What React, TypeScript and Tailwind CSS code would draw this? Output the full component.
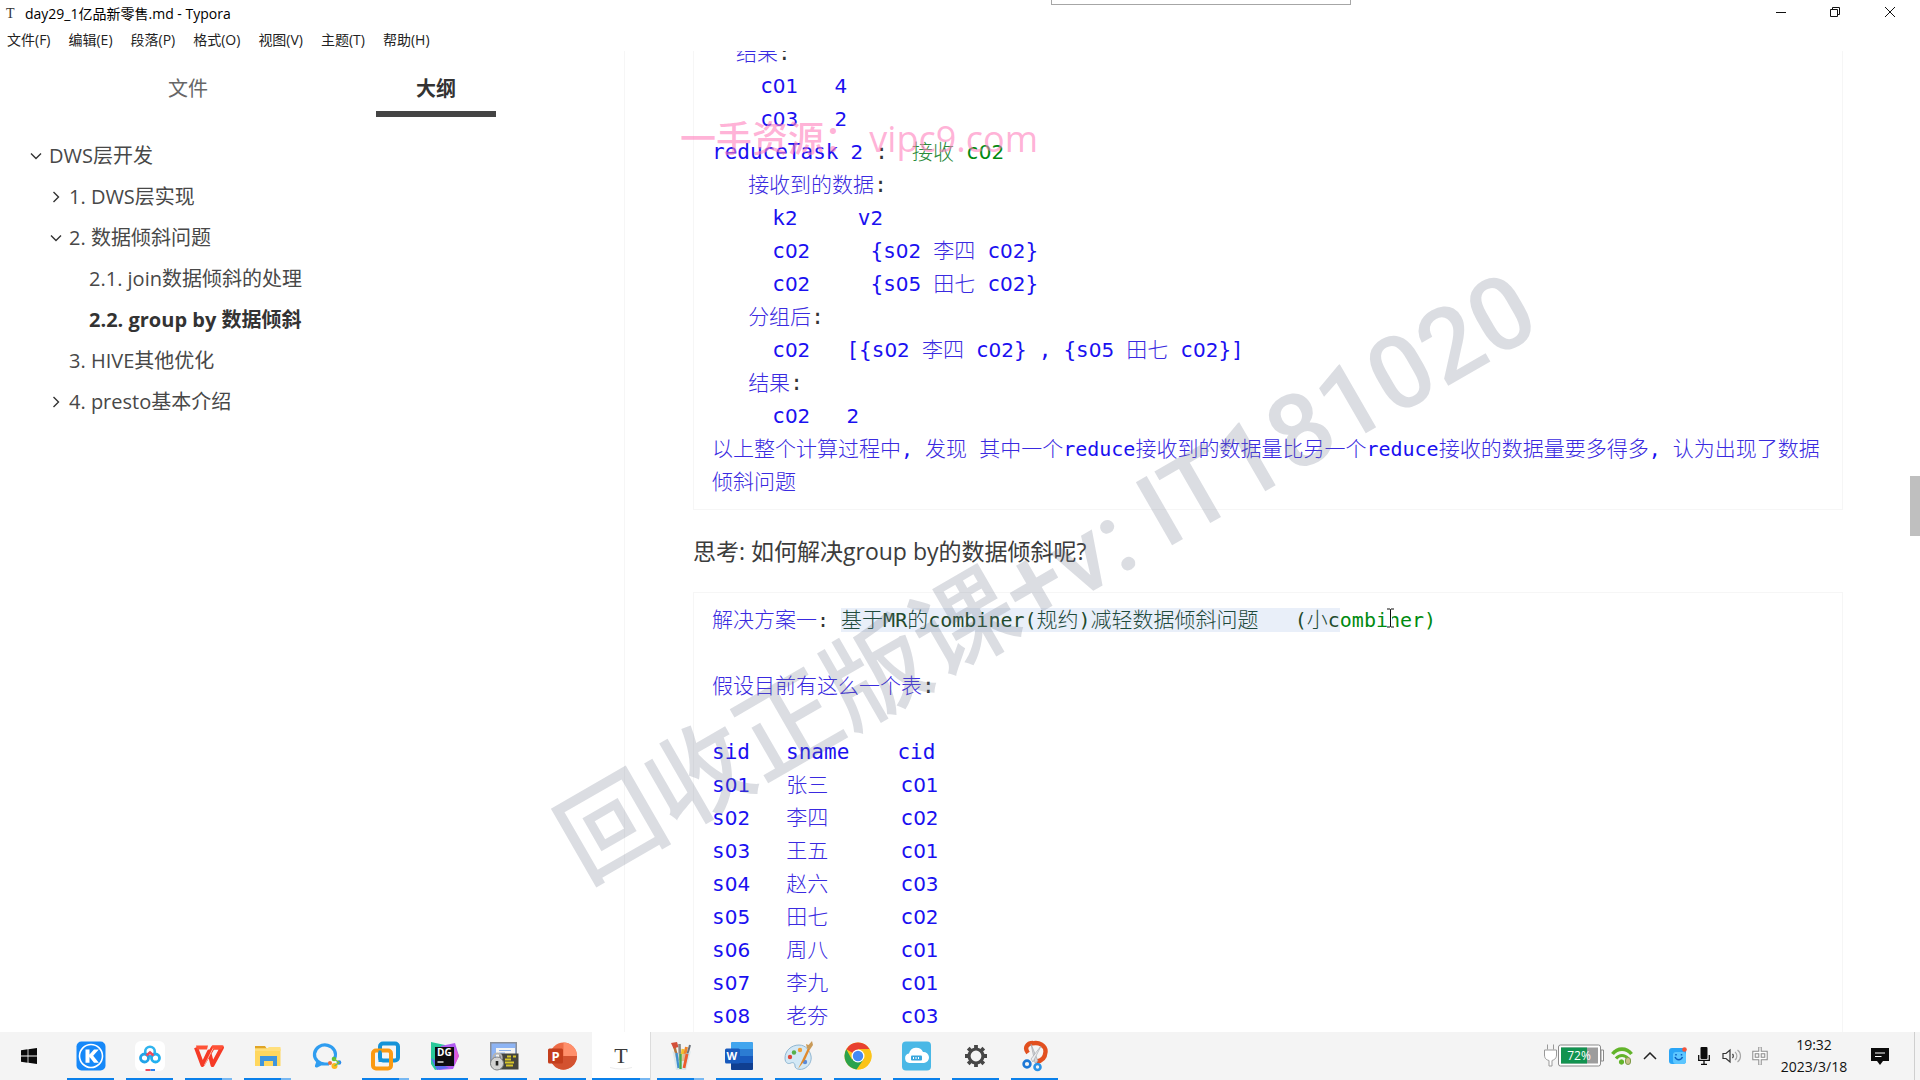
import type { ReactNode } from "react";

type Tone = "blue" | "green" | "dark" | "mark";
type Seg = [Tone, string];

const toneClass: Record<Tone, string> = {
  blue: "text-[#1a10f0]",
  green: "text-[#008a10]",
  dark: "text-[#333333]",
  mark: "text-[#1f4a2c] bg-[#e9eff9]",
};

const cjkClass: Record<Tone, string> = {
  blue: "font-light text-[21px] text-[#3a2ae0]",
  green: "font-light text-[21px] text-[#2a8a3a]",
  dark: "font-light text-[21px] text-[#333333]",
  mark: "font-light text-[21px] text-[#1f4a3c]",
};

function Run({ tone, text }: { tone: Tone; text: string }) {
  const parts = text.match(/[\u4e00-\u9fff]+|[0-9]+|\s+|[^\u4e00-\u9fff0-9\s]+/g) ?? [];
  return (
    <span className={toneClass[tone]}>
      {parts.map((p, i) => {
        if (/^[\u4e00-\u9fff]/.test(p)) {
          return <span key={i} className={cjkClass[tone]}>{p}</span>;
        }
        if (/^[0-9]/.test(p)) {
          return <span key={i} className="font-['DejaVu_Sans',sans-serif] text-[20px]">{p}</span>;
        }
        if (/^\s/.test(p)) {
          return <span key={i} className="text-[20px]">{p}</span>;
        }
        return p;
      })}
    </span>
  );
}

/* Lines that are mostly prose use the smaller Latin size. */
function isProse(line: Seg[]) {
  return line.map(([, t]) => t).join("").replace(/[^\u4e00-\u9fff]/g, "").length > 12;
}

function Fence({ lines, className }: { lines: Seg[][]; className: string }) {
  return (
    <pre
      className={`border border-[#f6f6f6] px-[18px] font-['DejaVu_Sans_Mono','Noto_Sans_CJK_SC',monospace] leading-[33px] whitespace-pre-wrap break-all ${className}`}
    >
      {lines.map((l, i) => (
        <code
          key={i}
          className={`block min-h-[33px] font-['DejaVu_Sans_Mono','Noto_Sans_CJK_SC',monospace] ${isProse(l) ? "text-[20px]" : "text-[21px]"}`}
        >
          {l.map(([tone, text], j) => (
            <Run key={j} tone={tone} text={text} />
          ))}
        </code>
      ))}
    </pre>
  );
}

const reduceLines: Seg[][] = [
  [["blue", "  结果"], ["dark", ":"]],
  [["blue", "    c01   4"]],
  [["blue", "    c03   2"]],
  [["blue", "reduceTask 2 "], ["dark", ":  "], ["green", "接收 c02"]],
  [["blue", "   接收到的数据"], ["dark", ":"]],
  [["blue", "     k2     v2"]],
  [["blue", "     c02     {s02 李四 c02}"]],
  [["blue", "     c02     {s05 田七 c02}"]],
  [["blue", "   分组后"], ["dark", ":"]],
  [["blue", "     c02   [{s02 李四 c02} , {s05 田七 c02}]"]],
  [["blue", "   结果"], ["dark", ":"]],
  [["blue", "     c02   2"]],
  [["blue", "以上整个计算过程中, 发现 其中一个reduce接收到的数据量比另一个reduce接收的数据量要多得多, 认为出现了数据倾斜问题"]],
];

const students: [string, string, string][] = [
  ["s01", "张三", "c01"],
  ["s02", "李四", "c02"],
  ["s03", "王五", "c01"],
  ["s04", "赵六", "c03"],
  ["s05", "田七", "c02"],
  ["s06", "周八", "c01"],
  ["s07", "李九", "c01"],
  ["s08", "老夯", "c03"],
];

const solutionLines: Seg[][] = [
  [
    ["blue", "解决方案一"],
    ["dark", ": "],
    ["mark", "基于MR的combiner(规约)减轻数据倾斜问题   (小c"],
    ["green", "ombiner)"],
  ],
  [],
  [["blue", "假设目前有这么一个表"], ["dark", ":"]],
  [],
  [["blue", "sid   sname    cid"]],
  ...students.map(([s, n, c]): Seg[] => [["blue", `${s}   ${n}      ${c}`]]),
];

function Chevron({ open }: { open: boolean }) {
  return (
    <svg viewBox="0 0 12 12" className="h-3 w-3" fill="none" stroke="#333" strokeWidth="1.4">
      <path d={open ? "M1 3.5 6 8.5 11 3.5" : "M3.5 1 8.5 6 3.5 11"} />
    </svg>
  );
}

function OutlineItem({
  label,
  indent,
  state,
  active,
}: {
  label: string;
  indent: string;
  state?: "open" | "closed";
  active?: boolean;
}) {
  return (
    <li className={`flex h-[41px] items-center ${indent}`}>
      <span className="flex w-[19px] shrink-0">
        {state && (
          <button aria-label={state === "open" ? "折叠" : "展开"}>
            <Chevron open={state === "open"} />
          </button>
        )}
      </span>
      <a href="#" className={active ? "font-bold text-[#333]" : "text-[#484848]"}>
        {label}
      </a>
    </li>
  );
}

const menus = ["文件(F)", "编辑(E)", "段落(P)", "格式(O)", "视图(V)", "主题(T)", "帮助(H)"];

function Ico({ children }: { children: ReactNode }) {
  return (
    <svg viewBox="0 0 32 32" className="h-8 w-8">
      {children}
    </svg>
  );
}

const bold = "font-['Open_Sans',sans-serif] font-bold";

const icons: { name: string; bar: "none" | "one" | "stack"; icon: ReactNode }[] = [
  {
    name: "K",
    bar: "one",
    icon: (
      <Ico>
        <rect x="1.5" y="1.5" width="29" height="29" rx="5" fill="#1688f8" />
        <circle cx="16" cy="16" r="11.5" fill="none" stroke="#fff" strokeWidth="1.6" />
        <path d="M10.5 9.500h4v5l4.500-5h4.800l-5.600 6.200 5.600 7h-4.800l-4.500-5.800v5.800h-4z" fill="#fff" />
      </Ico>
    ),
  },
  {
    name: "网盘",
    bar: "one",
    icon: (
      <Ico>
        <rect x="1" y="1" width="30" height="30" rx="6" fill="#fff" />
        <circle cx="16" cy="11.500" r="4.800" fill="none" stroke="#31b4ee" strokeWidth="2.600" />
        <circle cx="10.500" cy="18" r="4" fill="none" stroke="#22a3e8" strokeWidth="2.800" />
        <circle cx="21.500" cy="18" r="4" fill="none" stroke="#22b0f0" strokeWidth="2.800" />
        <path d="M12.500 15.500 16 12.500l3.500 3" fill="none" stroke="#f04b5a" strokeWidth="2.600" />
        <path d="M11.500 30h5" stroke="#f04b5a" strokeWidth="2" />
        <path d="M16.500 30h4.500" stroke="#2a82f0" strokeWidth="2" />
      </Ico>
    ),
  },
  {
    name: "WPS",
    bar: "stack",
    icon: (
      <Ico>
        <path
          d="M3 7.500 9.500 25 16 11.500 19.500 25 29 7.500H20L9.500 25"
          fill="none"
          stroke="#f53a26"
          strokeWidth="4"
          strokeLinejoin="round"
        />
        <path d="M3 5.500h12l-1 4H4z" fill="#ff5236" />
        <path d="M19 5.500h11.500l-2 4h-9.500z" fill="#ff5236" />
        <path d="M20 8.500 11.500 25" stroke="#ffae9c" strokeWidth="1" />
      </Ico>
    ),
  },
  {
    name: "资源管理器",
    bar: "stack",
    icon: (
      <Ico>
        <path d="M3 6h10l2 3H3z" fill="#e0a526" />
        <path d="M3 8.500h25.500V26H3z" fill="#ffd75e" />
        <path d="M3 8.500h12l2-1.500h11.500v4H3z" fill="#ffdf7c" />
        <path d="M8 16h17v10h-4v-5h-9v5H8z" fill="#3f95dd" />
      </Ico>
    ),
  },
  {
    name: "企业微信",
    bar: "none",
    icon: (
      <Ico>
        <path
          d="M23.500 18.500a10.500 9.500 0 1 0-9 5.500l3.500 0M7 21.500 5.500 26l5-2.500"
          fill="none"
          stroke="#2f9df0"
          strokeWidth="3.200"
          strokeLinejoin="round"
        />
        <circle cx="23" cy="19" r="2.300" fill="#5cc13a" />
        <circle cx="28" cy="22.500" r="2.300" fill="#2a8bf0" />
        <circle cx="23.500" cy="26" r="3" fill="#ffb61c" />
        <circle cx="19" cy="23" r="2" fill="#ef6a36" />
        <path d="M23 19 28 22.500 23.500 26" fill="none" stroke="#7fc23a" strokeWidth="1.500" />
      </Ico>
    ),
  },
  {
    name: "VMware",
    bar: "stack",
    icon: (
      <Ico>
        <rect x="10" y="3.500" width="18" height="17" rx="3" fill="none" stroke="#1593d8" strokeWidth="4" />
        <rect x="3" y="10.500" width="18" height="18" rx="3" fill="none" stroke="#fb9a12" strokeWidth="4" />
        <path d="M10 13v-2.500M10 18.500v2h9" fill="none" stroke="#1593d8" strokeWidth="3" />
      </Ico>
    ),
  },
  {
    name: "DataGrip",
    bar: "one",
    icon: (
      <Ico>
        <path d="M2 2l14 3 2 22-12 3-4-6z" fill="#28c99a" />
        <path d="M12 6l14-3 4 13-6 13-14 1z" fill="#b15cf0" />
        <path d="M2 18l10 6 8 4-12 2z" fill="#5a6cf0" />
        <path d="M26 8l4 8-4 8z" fill="#e45ad8" />
        <rect x="6" y="7" width="19" height="19" fill="#0c0c10" />
        <text x="8" y="16" fontSize="10" fill="#fff" className={bold}>
          DG
        </text>
        <path d="M8.500 22h6" stroke="#fff" strokeWidth="1.300" />
      </Ico>
    ),
  },
  {
    name: "终端",
    bar: "one",
    icon: (
      <Ico>
        <rect x="2" y="2" width="27" height="23" fill="#8a919c" />
        <rect x="3.500" y="3.500" width="24" height="19" fill="#8db4f4" />
        <path d="M8 8h19v13H8z" fill="#f4f4f2" />
        <path d="M11 10.500h12M11 13h6" stroke="#8ab0e8" strokeWidth="1.200" />
        <rect x="11.500" y="13.500" width="19" height="16" fill="#45453e" />
        <path d="M19 16.500h4M25 16.500h3M17 19.500h6M17 22.500h9M18 25.500h7" stroke="#d8c629" strokeWidth="1.800" />
        <path d="M5.500 19v-2a4 3.500 0 0 1 8 0v2" fill="none" stroke="#b4b4b4" strokeWidth="2.200" />
        <circle cx="9" cy="23.500" r="6.500" fill="#d2d2d2" stroke="#808285" />
        <path d="M9 21v4.500" stroke="#222" strokeWidth="2.600" />
      </Ico>
    ),
  },
  {
    name: "PowerPoint",
    bar: "one",
    icon: (
      <Ico>
        <circle cx="16.500" cy="16" r="13.500" fill="#ed6c47" />
        <path d="M16.500 2.500a13.500 13.500 0 0 1 13.500 13.500H16.500z" fill="#ff8f6b" />
        <path d="M30 16a13.500 13.500 0 0 1-25 7.200L16.500 16z" fill="#d35230" />
        <rect x="1" y="8.500" width="15" height="15" rx="1.500" fill="#c43e1c" />
        <text x="4.500" y="20.500" fontSize="13" fill="#fff" className={bold}>
          P
        </text>
      </Ico>
    ),
  },
  {
    name: "Typora",
    bar: "stack",
    icon: (
      <Ico>
        <text x="16" y="22.500" fontSize="22" textAnchor="middle" fill="#3a3a3a" className="font-['Liberation_Serif',serif]">
          T
        </text>
        <path d="M5 27.500c7 2 15 2 22 0" fill="none" stroke="#ececec" />
      </Ico>
    ),
  },
  {
    name: "画笔",
    bar: "stack",
    icon: (
      <Ico>
        <path d="M9 5l4 16" stroke="#b5743a" strokeWidth="2.600" />
        <path d="M6 3l6-1 1.500 5-5 1.500z" fill="#d4503a" />
        <path d="M14.500 4l.5 16" stroke="#8a8a86" strokeWidth="2.600" />
        <path d="M18 9l-1.500 12" stroke="#efc02a" strokeWidth="3" />
        <path d="M21.500 7l-3 14" stroke="#f0842a" strokeWidth="3" />
        <path d="M25 5l-5 18" stroke="#6a7078" strokeWidth="2" />
        <path d="M7.500 11l3.500 19h10l5-19c-3 4-15 4-18.500 0z" fill="#c9dfe6" fillOpacity=".6" />
        <path d="M11.500 13l2 15" stroke="#3f8fd0" strokeWidth="2.200" />
        <path d="M15.500 14v15" stroke="#49a84a" strokeWidth="2.400" />
        <path d="M22 14l-3 14" stroke="#ee5c2c" strokeWidth="2.800" />
      </Ico>
    ),
  },
  {
    name: "Word",
    bar: "one",
    icon: (
      <Ico>
        <rect x="7" y="2" width="22" height="28" rx="1.500" fill="#2b7cd3" />
        <path d="M7 3.500A1.500 1.500 0 0 1 8.500 2h19A1.500 1.500 0 0 1 29 3.500V9H7z" fill="#41a5ee" />
        <path d="M7 16h22v7H7z" fill="#185abd" />
        <path d="M7 23h22v5.500a1.500 1.500 0 0 1-1.500 1.500h-19A1.500 1.500 0 0 1 7 28.500z" fill="#103f91" />
        <rect x="1" y="8.500" width="15" height="15" rx="1.500" fill="#185abd" />
        <text x="2.500" y="20" fontSize="11" fill="#fff" className={bold}>
          W
        </text>
      </Ico>
    ),
  },
  {
    name: "画图",
    bar: "one",
    icon: (
      <Ico>
        <path
          d="M16 5C8 5 2 11 2 18c0 6 4 6 6 5s4 0 4 3 4 4 8 3c6-2 9-8 8-13S23 5 16 5z"
          fill="#d3e8f5"
          stroke="#8fb6d2"
        />
        <circle cx="7" cy="17" r="2.200" fill="#e0483a" />
        <circle cx="11" cy="12.500" r="2.200" fill="#56b04a" />
        <circle cx="17" cy="10" r="2.200" fill="#efa03a" />
        <circle cx="22" cy="22" r="2.200" fill="#5a8ad8" />
        <path d="M25 8 15 29l7-9 5-11z" fill="#e08a2c" />
        <path d="M23 4l2.500 1L29 1l1 4-3 4.500-3-1z" fill="#c99a58" />
      </Ico>
    ),
  },
  {
    name: "Chrome",
    bar: "one",
    icon: (
      <Ico>
        <circle cx="16" cy="16" r="13.500" fill="#fbc318" />
        <path d="M16 16 4.300 9.250A13.500 13.500 0 0 1 27.700 9.250H16z" fill="#e8402f" />
        <path d="M16 16 9.900 19.500 4.300 9.250A13.500 13.500 0 0 0 14.500 29.400L21.500 19.500z" fill="#2ba24c" />
        <path d="M16 9.200h11.700a13.500 13.500 0 0 1-12.500 20.200L22 19.500z" fill="#fbc318" />
        <circle cx="16" cy="16" r="6.500" fill="#fff" />
        <circle cx="16" cy="16" r="5.200" fill="#4489f4" />
      </Ico>
    ),
  },
  {
    name: "云盘",
    bar: "one",
    icon: (
      <Ico>
        <rect x="1" y="1.500" width="29" height="29" rx="4" fill="#4ab8e6" />
        <path d="M8.500 23a4.800 4.800 0 0 1-.5-9.500 7.500 7.500 0 0 1 14-1.500 5.500 5.500 0 0 1 1 11z" fill="#fff" />
        <rect x="10" y="15.500" width="11" height="5" rx="1" fill="#3aa6dc" />
        <path d="M12.500 17v2M15 17v2M17.500 17v2" stroke="#fff" />
      </Ico>
    ),
  },
  {
    name: "设置",
    bar: "one",
    icon: (
      <Ico>
        <circle cx="16" cy="16" r="7" fill="none" stroke="#474747" strokeWidth="3.200" />
        <g stroke="#474747" strokeWidth="3.800">
          <path d="M16 5v4M16 23v4M5 16h4M23 16h4M8.200 8.200l2.800 2.800M21 21l2.800 2.800M8.200 23.800l2.800-2.800M21 11l2.800-2.800" />
        </g>
      </Ico>
    ),
  },
  {
    name: "截图",
    bar: "one",
    icon: (
      <Ico>
        <path d="M9 13C5 8 8 3 14 3M13 3.500c7-2 14 2 13.500 8.500-.5 6-4 9-9 9.500" fill="none" stroke="#e2501f" strokeWidth="4.400" />
        <path d="M12 4l7 17-3 2z" fill="#d5d7da" stroke="#9c9fa4" strokeWidth=".6" />
        <path d="M22 6l-8 16-2-3z" fill="#eceef0" stroke="#9c9fa4" strokeWidth=".6" />
        <circle cx="8" cy="24" r="3.400" fill="none" stroke="#1d78d6" strokeWidth="2.600" />
        <circle cx="18.500" cy="27" r="3" fill="none" stroke="#2a92e6" strokeWidth="2.600" />
      </Ico>
    ),
  },
];

function Taskbar() {
  return (
    <footer className="relative z-10 flex h-12 shrink-0 items-stretch bg-[#f4f4f4]">
      <button aria-label="开始" className="flex w-[61px] items-center justify-center pr-[3px]">
        <svg viewBox="0 0 16 16" className="h-4 w-4" fill="#0a0a0a">
          <path d="M0 2.200 6.600 1.300V7.600H0zM7.400 1.200 16 0v7.600H7.400zM0 8.400h6.600v6.300L0 13.800zM7.400 8.400H16V16l-8.600-1.200z" />
        </svg>
      </button>
      {icons.map((it) => (
        <button
          key={it.name}
          aria-label={it.name}
          className={
            it.name === "Typora"
              ? "relative flex w-[59px] items-center justify-center border-r border-[#dcdcdc] bg-white"
              : "relative flex w-[59px] items-center justify-center"
          }
        >
          {it.icon}
          {it.bar !== "none" && (
            <span
              className={
                it.name === "Typora"
                  ? "absolute inset-x-0 bottom-0 flex h-0.5"
                  : "absolute inset-x-[6px] bottom-0 flex h-0.5"
              }
            >
              <span className="flex-1 bg-[#0a80ea]" />
              {it.bar === "stack" && <span className="w-[10px] bg-[#78b8f2]" />}
            </span>
          )}
        </button>
      ))}
      <div className="ml-auto flex items-center pr-[5px]">
        <svg viewBox="0 0 62 26" className="h-[26px] w-[62px]">
          <path
            d="M4.500 1.500v5M10.500 1.500v5M1.500 7h12v5c0 4-3 5-4.500 5.500V23H6v-5.500C4 17 1.500 16 1.500 12z"
            fill="#fff"
            stroke="#999"
          />
          <rect x="15.500" y="2" width="42" height="21" rx="2" fill="#fff" stroke="#8b8b8b" />
          <path d="M58 7h2.500v11H58z" fill="#fff" stroke="#8b8b8b" />
          <rect x="18" y="4.500" width="37" height="16" fill="#9d9d9d" />
          <rect x="18" y="4.500" width="26" height="16" fill="#129350" />
          <text x="36" y="17" fontSize="12" textAnchor="middle" fill="#fff" className="font-['Open_Sans',sans-serif]">
            72%
          </text>
        </svg>
        <svg viewBox="0 0 22 20" className="ml-[6px] h-5 w-[22px]" fill="none" stroke="#62b42a">
          <path d="M1.500 8c5-6.500 14-6.500 19 0" strokeWidth="3.600" />
          <path d="M5 12.500c3.500-4 8.500-4 12 0" strokeWidth="3.200" />
          <circle cx="10.500" cy="16" r="2.200" fill="#62b42a" />
          <rect x="14.500" y="11.500" width="5" height="7" rx="2.500" fill="#c9c08a" stroke="#7f9a48" />
        </svg>
        <svg viewBox="0 0 14 8" className="ml-[10px] h-2 w-[14px]" fill="none" stroke="#222" strokeWidth="1.500">
          <path d="M1 7l6-6 6 6" />
        </svg>
        <svg viewBox="0 0 18 18" className="ml-[12px] h-[18px] w-[18px]">
          <rect y="1" width="17" height="16" rx="3" fill="#2aa5f6" />
          <rect x="4" y="5" width="13" height="12" rx="3" fill="#5cc6ff" />
          <path d="M6 10c1.500 3.500 6 3.500 7.500 0M7 7v1.500M12.500 7v1.500" fill="none" stroke="#0b5fc0" strokeWidth="1.500" />
          <circle cx="15.500" cy="2.500" r="2.300" fill="#f4533a" />
        </svg>
        <svg viewBox="0 0 12 18" className="ml-[11px] h-[18px] w-3">
          <rect x="2.500" width="7" height="12" rx="1" fill="#0c0c0c" />
          <path d="M.7 8v5.300h10.600V8M6 13v4M3 17.300h6" fill="none" stroke="#0c0c0c" strokeWidth="1.300" />
        </svg>
        <svg viewBox="0 0 20 16" className="ml-[12px] h-4 w-5" fill="none" stroke="#333">
          <path d="M1 5.500h3L8 2v12l-4-3.500H1z" strokeWidth="1.200" />
          <path d="M10.500 6c1 1 1 3 0 4" strokeWidth="1.200" />
          <path d="M13 4c2.500 2 2.500 6 0 8M15.500 2c4 3 4 9 0 12" stroke="#a8a8a8" strokeWidth="1.200" />
        </svg>
        <svg viewBox="0 0 16 18" className="ml-[10px] h-[18px] w-4" fill="none">
          <path d="M2 5.500h12v6H2zM8 1v16" stroke="#8a8a8a" strokeWidth="3.400" strokeLinecap="square" />
          <path d="M2 5.500h12v6H2zM8 1v16" stroke="#fff" strokeWidth="1.400" strokeLinecap="square" />
        </svg>
        <div className="ml-[8px] flex w-[76px] flex-col text-center text-[14px] leading-[22px] text-[#111]">
          <time>19:32</time>
          <time>2023/3/18</time>
        </div>
        <svg viewBox="0 0 18 17" className="mr-[25px] ml-[19px] h-[17px] w-[18px]">
          <path d="M0 0h18v13h-6l-3 4-3-4H0z" fill="#0b0b0b" />
          <path d="M4 5h10M4 8.500h6.500" stroke="#fff" strokeWidth="1.200" />
        </svg>
        <span className="h-12 w-px bg-[#cfcfcf]" />
      </div>
    </footer>
  );
}

export default function App() {
  return (
    <div className="relative flex h-screen flex-col overflow-hidden bg-white font-['Open_Sans','Noto_Sans_CJK_SC',sans-serif] text-[#333]">
      <header className="shrink-0">
        <div className="flex h-[28px] items-start">
          <div className="flex h-[26px] items-center pl-[6px] text-[14px] text-black">
            <span className="w-[19px] font-['Liberation_Serif',serif] text-[14px] text-[#333]">T</span>
            <h1>day29_1亿品新零售.md - Typora</h1>
          </div>
          <div className="ml-auto flex h-[24px] items-center pr-[2px]">
            <button aria-label="最小化" className="flex w-[55px] justify-center">
              <svg viewBox="0 0 10 10" className="h-[10px] w-[10px]" stroke="#111">
                <path d="M0 5.500h10" />
              </svg>
            </button>
            <button aria-label="还原" className="flex w-[54px] justify-center">
              <svg viewBox="0 0 10 10" className="h-[10px] w-[10px]" fill="none" stroke="#111">
                <path d="M.5 2.500h7v7h-7zM2.500 2.500v-2h7v7h-2" />
              </svg>
            </button>
            <button aria-label="关闭" className="flex w-[56px] justify-center">
              <svg viewBox="0 0 10 10" className="h-[10px] w-[10px]" stroke="#111">
                <path d="M0 0l10 10M10 0 0 10" />
              </svg>
            </button>
          </div>
        </div>
        <nav className="flex h-[23px] items-center gap-[18px] pl-[7px] text-[14px] text-[#222]">
          {menus.map((m) => (
            <button key={m}>{m}</button>
          ))}
        </nav>
      </header>

      <div className="flex min-h-0 flex-1">
        <aside className="w-[625px] shrink-0 border-r border-[#f6f6f6]">
          <div role="tablist" className="grid grid-cols-2 px-16 pt-[18px] text-[20px]">
            <button role="tab" aria-selected="false" className="flex h-12 justify-center leading-[40px] text-[#666]">
              文件
            </button>
            <button role="tab" aria-selected="true" className="flex h-12 flex-col items-center justify-between font-bold leading-[40px]">
              大纲
              <span className="h-[6px] w-[120px] bg-[#444]" />
            </button>
          </div>
          <ul className="mt-[18px] text-[20px]">
            <OutlineItem label="DWS层开发" indent="pl-[30px]" state="open" />
            <OutlineItem label="1. DWS层实现" indent="pl-[50px]" state="closed" />
            <OutlineItem label="2. 数据倾斜问题" indent="pl-[50px]" state="open" />
            <OutlineItem label="2.1. join数据倾斜的处理" indent="pl-[70px]" />
            <OutlineItem label="2.2. group by 数据倾斜" indent="pl-[70px]" active />
            <OutlineItem label="3. HIVE其他优化" indent="pl-[50px]" />
            <OutlineItem label="4. presto基本介绍" indent="pl-[50px]" state="closed" />
          </ul>
        </aside>

        <main className="relative min-w-0 flex-1 overflow-hidden pr-[77px] pl-[68px]">
          <div className="-mt-[15px]">
            <Fence lines={reduceLines} className="pb-[10px]" />
            <p className="my-6 text-[23px] leading-[34px] text-[#3c3c3c]">
              思考: 如何解决group by的数据倾斜呢?
            </p>
            <Fence lines={solutionLines} className="pt-[11px]" />
          </div>
          <span className="absolute top-[425px] right-0 h-[60px] w-[10px] bg-[#bfbfbf]" />
        </main>
      </div>

      <Taskbar />

      <div className="absolute top-0 left-[1051px] h-[5px] w-[300px] border border-t-0 border-[#a6a6a6] bg-white" />
      <div className="pointer-events-none absolute top-[115px] left-[680px] text-[36px] leading-[48px] font-medium whitespace-pre text-[#ff7fbd]/60">
        一手资源： vipc9.com
      </div>
      <div className="pointer-events-none absolute top-[577px] left-[1047px] -translate-x-1/2 -translate-y-1/2 -rotate-30 font-['Roboto','Noto_Sans_CJK_SC',sans-serif] text-[102px] leading-none font-medium whitespace-pre text-[#70768c]/25">
        回收正版课+v: IT181020
      </div>
      <svg viewBox="0 0 9 20" className="pointer-events-none absolute top-[608px] left-[1386px] h-5 w-[9px]" fill="none">
        <path d="M1 1h3l.5.500.5-.500h3M4.500 1.500v17M1 19h3l.5-.500.5.500h3" stroke="#fff" strokeWidth="3" />
        <path d="M1 1h3l.5.500.5-.500h3M4.500 1.500v17M1 19h3l.5-.500.5.500h3" stroke="#111" />
      </svg>
    </div>
  );
}
